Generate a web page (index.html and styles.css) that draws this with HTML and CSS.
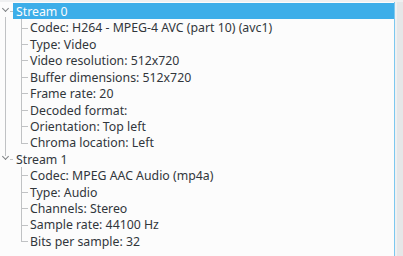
FILE: index.html
```
<!DOCTYPE html>
<html lang="en">
<head>
    <meta charset="UTF-8">
    <title>Media info</title>
    <link rel="stylesheet" href="styles.css">
</head>
<body>
    <div class="frame">
        <div class="view">
            <ul class="tree">
                <li class="stream">
                    <div class="row selected"><span class="twisty"></span><span class="label">Stream 0</span></div>
                    <ul class="children">
                        <li><span class="label">Codec: H264 - MPEG-4 AVC (part 10) (avc1)</span></li>
                        <li><span class="label">Type: Video</span></li>
                        <li><span class="label">Video resolution: 512x720</span></li>
                        <li><span class="label">Buffer dimensions: 512x720</span></li>
                        <li><span class="label">Frame rate: 20</span></li>
                        <li><span class="label">Decoded format:</span></li>
                        <li><span class="label">Orientation: Top left</span></li>
                        <li><span class="label">Chroma location: Left</span></li>
                    </ul>
                </li>
                <li class="stream last">
                    <div class="row"><span class="twisty"></span><span class="label">Stream 1</span></div>
                    <ul class="children">
                        <li><span class="label">Codec: MPEG AAC Audio (mp4a)</span></li>
                        <li><span class="label">Type: Audio</span></li>
                        <li><span class="label">Channels: Stereo</span></li>
                        <li><span class="label">Sample rate: 44100 Hz</span></li>
                        <li><span class="label">Bits per sample: 32</span></li>
                    </ul>
                </li>
            </ul>
        </div>
        <div class="scrollbar"></div>
    </div>
</body>
</html>
```

FILE: styles.css
```
body {
    margin: 0;
    background: #eff0f1;
    font-family: "Noto Sans", "DejaVu Sans", sans-serif;
    font-size: 12.3px;
    color: #31363b;
}

.frame {
    display: flex;
    height: 256px;
    padding-top: 2px;
    box-sizing: border-box;
}

.view {
    width: 394px;
    background: #fcfcfc;
    border-right: 1px solid #7cc8ef;
    padding-top: 1px;
}

.scrollbar {
    flex: 1;
    margin-left: 2px;
    background: #e6e7e8;
}

.tree, .children {
    list-style: none;
    margin: 0;
    padding: 0;
}

.row, .children li {
    display: flex;
    align-items: flex-start;
    height: 16.43px;
    line-height: 17px;
}

.stream {
    position: relative;
}

/* root branch line */
.stream::before {
    content: "";
    position: absolute;
    left: 5px;
    top: 14px;
    bottom: -5px;
    border-left: 1px solid #c0c2c4;
}

.stream.last::before {
    display: none;
}

.twisty {
    position: relative;
    width: 13px;
    height: 16px;
    flex: none;
}

.twisty::before {
    content: "";
    position: absolute;
    left: 3px;
    top: 3px;
    width: 4px;
    height: 4px;
    border-right: 1px solid #7f8285;
    border-bottom: 1px solid #7f8285;
    transform: rotate(45deg);
}

.twisty::after {
    content: "";
    position: absolute;
    left: 10px;
    top: 8px;
    width: 3px;
    border-top: 1px solid #c0c2c4;
}

.row .label {
    flex: 1;
    padding-left: 3px;
    height: 16px;
}

.row.selected .label {
    background: #3daee9;
    color: #fcfcfc;
}

.children li {
    position: relative;
    padding-left: 30px;
}

.children li::before {
    content: "";
    position: absolute;
    left: 21px;
    top: 0;
    bottom: 0;
    border-left: 1px solid #c0c2c4;
}

.children li:last-child::before {
    bottom: 50%;
}

.children li::after {
    content: "";
    position: absolute;
    left: 21px;
    top: 50%;
    width: 7px;
    border-top: 1px solid #c0c2c4;
}
```
